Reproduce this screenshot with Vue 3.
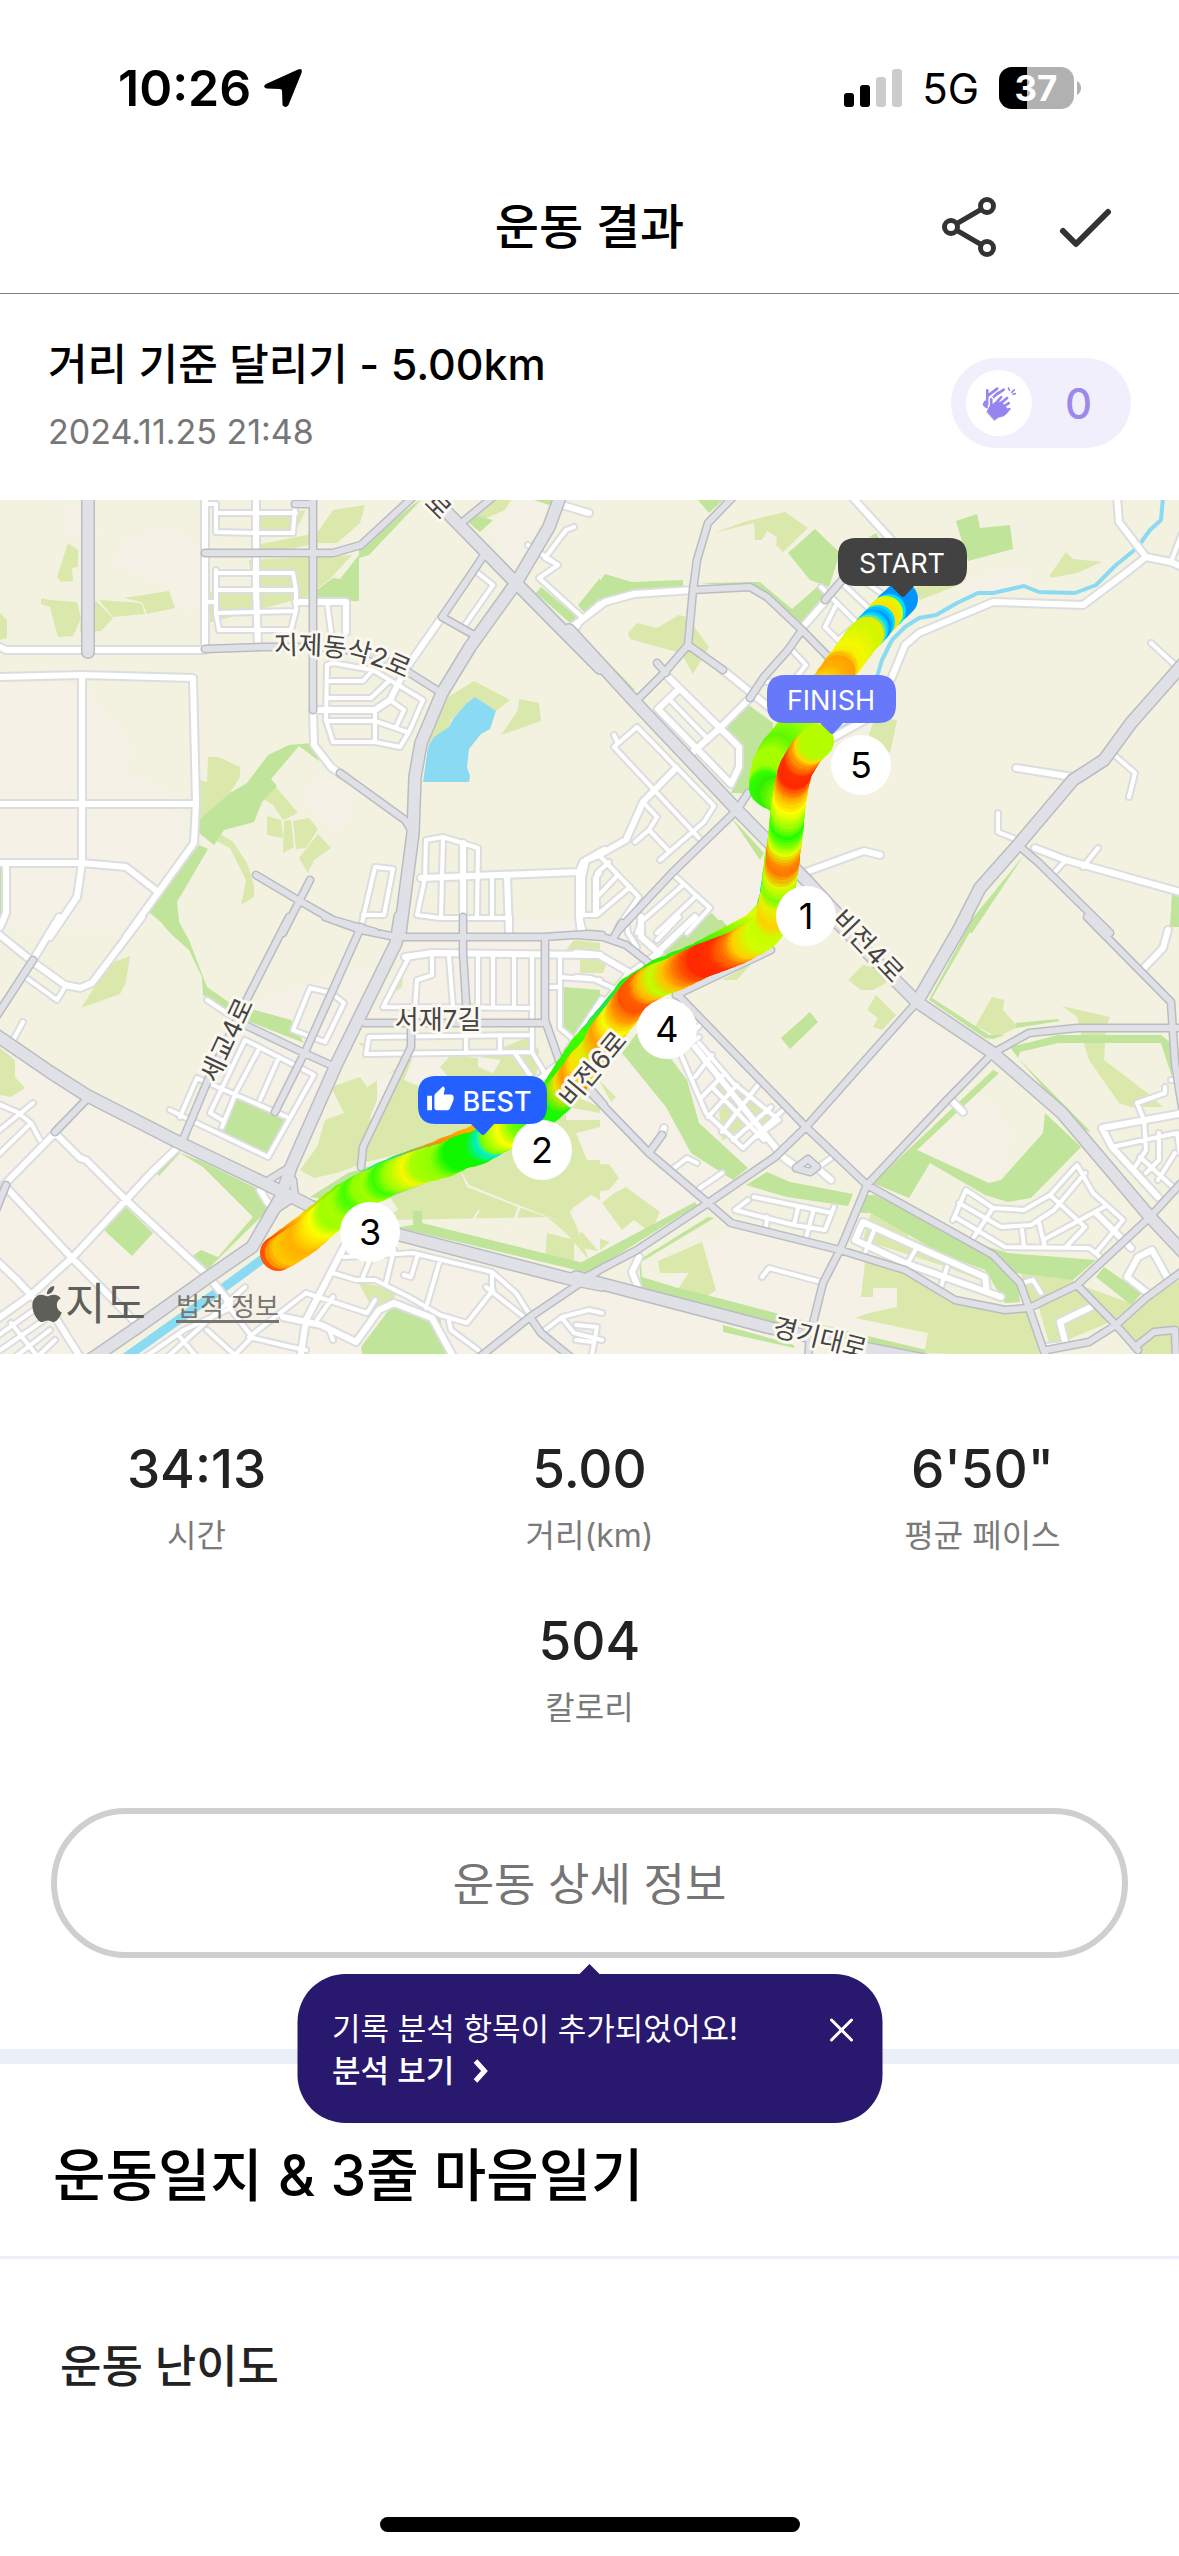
<template>
    <div class="page">
        <div class="status">
            <div class="status-side">
                <span class="clock">10:26</span>
                <svg class="locate" viewBox="0 0 40 40" aria-hidden="true">
                    <path d="M3 16 35 1.500Q40-.5 38.500 5L25.500 37Q22.500 41 19.500 37L19 22.500Q18.500 21 17 21L3.500 20.500Q-1 19 3 16Z" />
                </svg>
            </div>
            <div class="status-side right">
                <svg class="signal" viewBox="0 0 58 38" aria-hidden="true">
                    <rect x="0" y="24" width="10" height="14" rx="3" />
                    <rect x="16" y="16" width="10" height="22" rx="3" />
                    <rect class="off" x="32" y="8" width="10" height="30" rx="3" />
                    <rect class="off" x="48" y="0" width="10" height="38" rx="3" />
                </svg>
                <span class="network">5G</span>
                <svg class="battery" viewBox="0 0 83 42" aria-label="37%">
                    <clipPath id="cell"><rect width="75" height="42" rx="13" /></clipPath>
                    <g clip-path="url(#cell)">
                        <rect width="75" height="42" fill="#b1b1b1" />
                        <rect width="28" height="42" />
                    </g>
                    <path d="M78 14Q82 16 82 21T78 28Z" fill="#b1b1b1" />
                    <text x="37" y="34" text-anchor="middle">37</text>
                </svg>
            </div>
        </div>

        <header class="bar">
            <h1>운동 결과</h1>
            <div class="actions">
                <button type="button" aria-label="공유">
                    <svg viewBox="0 0 60 60">
                        <path d="M18 26.500 42 12.500M18 33.500 42 47.500" />
                        <circle cx="12" cy="30" r="6.500" />
                        <circle cx="48" cy="9" r="6.500" />
                        <circle cx="48" cy="51" r="6.500" />
                    </svg>
                </button>
                <button type="button" aria-label="완료">
                    <svg viewBox="0 0 60 60"><path class="tick" d="M8 34 21 47 53 15" /></svg>
                </button>
            </div>
        </header>

        <section class="summary">
            <div>
                <h2>거리 기준 달리기 - 5.00km</h2>
                <p>2024.11.25 21:48</p>
            </div>
            <button type="button" class="clap" aria-label="박수">
                <span class="clap-icon">
                    <svg viewBox="186 644 106 106">
                        <g class="finger">
                            <path d="M202 657V700M196 692 192 700 200 708M207 671 232 652M214 684 235 664M225 673 252 655" />
                        </g>
                        <path class="gap" d="M214 684V716M226 698 245 677M236 702 264 678M244 711 268 696M250 720 270 713" />
                        <path class="palm" d="M201 722 210 704 226 694 245 692 262 712 266 722 252 735 236 739 224 748Z" />
                        <g class="finger">
                            <path d="M214 684V716M226 698 244 678M236 702 262 680M244 711 267 696M250 722 269 714" />
                        </g>
                        <path class="spark" d="M266 650 269 657M276 663 284 656M280 669 287 667" />
                    </svg>
                </span>
                <span class="clap-count">0</span>
            </button>
        </section>

        <section class="map">
            <svg class="canvas" viewBox="0 0 1179 854" role="img" aria-label="달리기 경로">
                <rect width="1179" height="854" fill="#f3f1e0" />
                <path class="urban" :d="map.urban" />
                <path class="field" :d="map.field" />
                <path class="urban" :d="map.clearing" />
                <path class="park" :d="map.park" />
                <path class="lake" :d="map.lake" />
                <path class="river" :d="map.river" />
                <path class="creek" :d="map.creek" />
                <path class="lane edge" :d="map.lane" />
                <path class="street edge" :d="map.street" />
                <path class="lane" :d="map.lane" />
                <path class="street" :d="map.street" />
                <path class="road edge" :d="map.road" />
                <path class="highway edge" :d="map.highway" />
                <path class="road" :d="map.road" />
                <path class="highway" :d="map.highway" />

                <circle v-for="(dot, i) in route" :key="i" :cx="dot.x" :cy="dot.y" r="17" :fill="dot.color" />

                <g class="names">
                    <path id="curve" d="M274 155Q310 153 340 157T410 181" fill="none" stroke="none" />
                    <text><textPath href="#curve">지제동삭2로</textPath></text>
                    <text v-for="n in names" :key="n.text + n.x" text-anchor="middle" :transform="`translate(${n.x} ${n.y}) rotate(${n.angle})`" dy="9">{{ n.text }}</text>
                </g>

                <g v-for="k in laps" :key="k.label" class="lap">
                    <circle :cx="k.x" :cy="k.y" r="30" />
                    <text :x="k.x" :y="k.y + 13">{{ k.label }}</text>
                </g>

                <g v-for="b in badges" :key="b.label" class="badge" :transform="`translate(${b.x} ${b.y})`">
                    <path :fill="b.color" d="M18 0H111Q129 0 129 18V30Q129 48 111 48H76L67 58Q65 60 63 58L53 48H18Q0 48 0 30V18Q0 0 18 0Z" />
                    <path v-if="b.thumb" class="thumb" transform="translate(8 9) scale(1.200)" d="M1 21h4V9H1v12zm22-11c0-1.100-.9-2-2-2h-6.310l.95-4.570.03-.32c0-.41-.17-.79-.44-1.060L14.170 1 7.590 7.590C7.220 7.950 7 8.450 7 9v10c0 1.100.9 2 2 2h9c.83 0 1.540-.5 1.840-1.220l3.020-7.050c.09-.23.14-.47.14-.73v-2z" />
                    <text :x="b.thumb ? 79 : 64" y="35" :class="{ strong: b.thumb }">{{ b.label }}</text>
                </g>
            </svg>
            <div class="credit">
                <span class="brand">
                    <svg viewBox="2 0 20 24" aria-hidden="true">
                        <path d="M12.152 6.896c-.948 0-2.415-1.078-3.960-1.040-2.040.027-3.910 1.183-4.961 3.014-2.117 3.675-.546 9.103 1.519 12.090 1.013 1.454 2.208 3.090 3.792 3.039 1.520-.065 2.090-.987 3.935-.987 1.831 0 2.350.987 3.960.948 1.637-.026 2.676-1.480 3.676-2.948 1.156-1.688 1.636-3.325 1.662-3.415-.039-.013-3.182-1.221-3.220-4.857-.026-3.040 2.480-4.494 2.597-4.559-1.429-2.090-3.623-2.324-4.390-2.376-2-.156-3.675 1.090-4.610 1.090zM15.530 3.830c.843-1.012 1.400-2.427 1.245-3.830-1.207.052-2.662.805-3.532 1.818-.78.896-1.454 2.338-1.273 3.714 1.338.104 2.715-.688 3.559-1.701" />
                    </svg>
                    지도
                </span>
                <a href="#legal">법적 정보</a>
            </div>
        </section>

        <dl class="stats">
            <div v-for="s in stats" :key="s.label" class="stat">
                <dt>{{ s.label }}</dt>
                <dd>{{ s.value }}</dd>
            </div>
        </dl>

        <div class="detail">
            <button type="button" class="detail-btn">운동 상세 정보</button>
            <div v-if="tipOpen" class="tip">
                <p>
                    기록 분석 항목이 추가되었어요!<br />
                    <a href="#analysis">
                        분석 보기
                        <svg viewBox="0 0 16 26" aria-hidden="true"><path d="M3 3 12 13 3 23" /></svg>
                    </a>
                </p>
                <button type="button" aria-label="닫기" @click="tipOpen = false">
                    <svg viewBox="0 0 24 24"><path d="M2 2 22 22M22 2 2 22" /></svg>
                </button>
            </div>
        </div>

        <section class="diary">
            <h2>운동일지 &amp; 3줄 마음일기</h2>
            <h3>운동 난이도</h3>
        </section>

        <div class="home"></div>
    </div>
</template>

<script setup>
import { ref } from "vue";

const tipOpen = ref(true);

const stats = [
    { value: "34:13", label: "시간" },
    { value: "5.00", label: "거리(km)" },
    { value: "6'50\"", label: "평균 페이스" },
    { value: "504", label: "칼로리" },
];

const laps = [
    { label: "5", x: 861, y: 265 },
    { label: "1", x: 806, y: 416 },
    { label: "4", x: 667, y: 529 },
    { label: "2", x: 542, y: 650 },
    { label: "3", x: 370, y: 732 },
];

const badges = [
    { label: "START", x: 838, y: 38, color: "#424242" },
    { label: "FINISH", x: 767, y: 175, color: "#6878fb" },
    { label: "BEST", x: 418, y: 576, color: "#2360ff", thumb: true },
];

const names = [
    { text: "로", x: 438, y: 6, angle: 45 },
    { text: "세교4로", x: 227, y: 540, angle: -65 },
    { text: "서재7길", x: 438, y: 520, angle: 0 },
    { text: "비전6로", x: 593, y: 569, angle: -50 },
    { text: "비전4로", x: 868, y: 446, angle: 46 },
    { text: "경기대로", x: 820, y: 838, angle: 14 },
];

// vector tiles: nw, ne, sw, se. Shapes are "x,y x,y" lists split by "|"
const tiles = [
    {
        x: 0, y: -10,
        urban: "0,580 215,580 290,690 350,770 330,850 420,890 508,1060 330,1320 0,1320|300,220 330,150 420,110 500,140 530,200 520,340 480,365 440,290|790,930 830,850 930,890 910,1000 870,1030|165,30 280,130 170,130|1290,120 1350,30 1440,30 1380,170 1340,240",
        field: "178,160 203,180 203,232 188,235 190,272 160,277 148,260|106,323 130,330 200,335 212,385 190,437 152,442 130,350 108,342|250,332 295,385 265,422 210,425 212,370|260,330 368,340 378,372 295,382|325,325 443,303 457,355 385,372 370,335|0,370 18,390 18,445 0,450|680,80 800,60 775,120 680,120|670,165 830,130 870,60 955,45 940,100 880,160 830,160 670,200|650,210 920,195 860,270 800,320 545,400 545,310 660,290|1240,573 1333,630 1296,662 1240,625 1180,690 1175,715 1115,770 1130,720 1170,620|1357,627 1410,640 1414,693 1310,735 1355,660|545,800 570,800 627,832 627,862 600,910 522,990 522,870 540,875|680,920 720,888 780,968 740,990 715,945|698,977 735,990 740,1045 698,1035|742,993 760,990 768,1070 740,1088|765,992 808,983 832,1018 800,1075 775,1078|832,1032 866,1075 820,1110 804,1148 782,1105|548,1045 565,1022 610,1055 645,1120 664,1185 664,1222 630,1245 642,1170 600,1075|1270,30 1335,30 1320,60 1260,90 1245,75",
        park: "520,990 600,910 645,880 700,795 755,765 815,758 835,812 783,768 708,868 725,887 685,935 665,997 585,1020 560,1065 520,1030|520,1065 543,1078 462,1235 470,1320 445,1320 390,1265|830,300 870,265 890,268 938,195 938,332 830,332|1085,40 1100,30 965,195 938,205 938,180|1415,290 1510,385 1490,400 1400,310|1568,265 1568,330 1530,370 1510,345|1235,75 1290,90 1255,125 1225,100|0,1130 6,1130 6,1260 0,1280|1395,30 1445,30 1435,45|1510,430 1568,490 1568,510",
        lake: "1242,622 1296,662 1280,718 1258,733 1225,778 1220,830 1228,858 1226,875 1105,875 1120,770 1135,742 1175,712 1185,688 1220,640",
        highway: "1465,20 1435,110 1350,280 1230,470 1155,610 1100,760 1085,860 1080,1030 1045,1330|230,20 230,485|1130,20 1350,280 1568,535",
        road: "817,20 817,660|535,190 830,190 870,188 945,165 1080,20|535,478 680,470 817,470 960,485 1060,540 1150,605|1265,195 1235,250 1155,380 1240,435|890,850 1060,990 1080,1030|668,1155 780,1230 870,1290 980,1325|810,1170 740,1330|1210,1280 1210,1330|770,42 817,42|1290,20 1215,90",
        street: "535,20 535,478|0,470 15,480 535,480|670,20 670,300 675,470|0,562 215,555 505,565 512,940 508,1060 330,1340|215,555 215,1120 200,1220 130,1340|0,942 512,942|0,1120 215,1120 330,1130 412,1205|15,1120 15,1270 0,1310|817,660 822,765 865,830 895,855|1155,380 1060,540 1020,630 980,660 817,660|1100,1163 1515,1145 1515,1280 1520,1330|1515,1145 1525,1115 1580,1080|1210,1060 1210,1280|1325,1160 1330,1330|1470,45 1540,70|775,335 905,335 905,425",
        lane: "535,42 565,42 565,125 670,130 765,130 772,50|565,70 775,70|565,240 565,370 572,420 760,420 775,360 775,300 765,248 565,248|565,300 775,300|565,370 775,362|535,335 560,335|855,335 865,425|855,525 870,520 975,540 1040,585 1105,630 1070,725 1045,772 980,755 870,755 852,690 855,525|855,573 950,573 970,545|855,625 970,625 1020,570|855,693 980,693 1065,725|980,660 980,755|1020,630 1055,660 1035,710|1250,248 1288,285 1215,405|1500,110 1480,120 1425,205 1460,225 1410,265 1525,385 1568,340|1380,165 1460,225|1525,385 1500,425|945,1310 980,1130 1028,1138 1005,1275 950,1275|1110,1163 1115,1050 1158,1042 1250,1075 1248,1283|1158,1042 1152,1280|1110,1163 1090,1275 1150,1283 1330,1283|1285,1160 1285,1283|1568,1150 1555,1165 1555,1275 1515,1275",
    },
    {
        x: 580, y: -10,
        urban: "240,1150 400,1000 470,1100 470,1280 400,1320 345,1320 340,1255|960,290 1080,250 1180,240 1160,290 1060,310",
        field: "350,130 430,95 535,67 595,115 530,185 512,165 515,140 490,122 475,150 457,150 455,100|125,430 148,398 200,415 260,375 280,380 338,470 295,553 265,490 205,470 130,448|1270,185 1290,208 1365,215 1300,250 1228,265 1230,255|870,290 1003,280 890,330|770,680 828,690 810,790 755,735",
        park: "308,30 375,30 338,70|545,190 615,117 680,190 650,290 600,270|0,360 65,253 135,275 268,270 270,295 140,305 60,330|983,92 1038,73 1047,115 1123,105 1132,178 1015,212|310,280 470,275 555,358 620,290 650,300 580,400 445,290|435,640 505,700 500,860 430,910 395,910 420,840 420,770 365,715|395,980 480,1090 470,1110|1160,1095 1025,1330 1000,1320|1548,1210 1568,1210 1568,1312 1542,1312|290,1315 345,1270 385,1320|0,430 145,600 130,600|755,140 775,130 785,150",
        creek: "775,570 790,510 815,450 850,410 885,385 930,375 985,340 1040,310 1080,310 1160,288 1200,305 1295,310 1350,285 1400,225 1455,175 1490,120 1520,90 1525,20|740,680 640,740",
        highway: "-30,420 145,635 410,960 590,1170 680,1280|1580,520 1440,700 1370,810 1290,870 1145,1065 1045,1195 985,1330",
        road: "400,20 335,100 305,210 295,300 283,465|295,300 445,292 490,320 580,420 700,560|283,465 220,550 145,635|283,465 375,540|580,420 545,480 480,560 445,625|200,520 225,550|640,330 690,265|410,960 240,1150 95,1330|410,960 440,910|1145,1065 1200,1120 1385,1330",
        street: "295,300 140,312 65,335 -20,410|580,415 650,320|715,25 825,165|375,540 510,665|445,625 365,715 295,785|225,555 365,715 415,770 415,830 395,882 203,657 260,597|640,755 745,690 815,560 850,465 885,430 1080,335 1315,345 1420,255 1480,200 1410,95 1405,20|1480,200 1545,215 1580,235|590,1145 742,1083 785,1095|1140,835 1290,862|1190,1075 1270,1110 1568,1205|250,835 165,935 120,1050 50,1095 15,1110 5,1160 5,1275",
        lane: "232,628 330,740|88,770 150,712 350,948 325,995 210,1110|88,735 100,760 88,770 310,1045|165,935 200,980 180,1020 145,1055|180,1020 230,1080|50,1095 155,1220 100,1310|100,1155 45,1220|75,1115 45,1150 45,1275 0,1275|45,1275 130,1190|245,1155 340,1255 280,1330|270,1185 160,1295 150,1330|300,1220 200,1330|1545,215 1575,130|1390,788 1450,848 1435,920|1493,460 1555,525|1092,970 1092,1025 1145,1050|1355,1075 1315,1130|1270,1110 1240,1150|630,290 760,440|685,280 780,380|740,270 800,320|670,345 640,410 675,450 730,400|555,480 590,525 560,570 485,575",
    },
    {
        x: 0, y: 420,
        urban: "0,360 225,540 690,790 540,1075 250,1310 0,1310|350,1310 700,1010 900,960 1480,1085 1568,1110 1568,1310|480,640 640,250 1010,130 880,430 740,740|960,310 1430,310 1568,550 1568,0 1080,0 1050,130",
        field: "340,108 330,185 315,222 213,263 265,170 290,130|0,385 40,420 40,470 65,505 30,530 0,525|1095,400 1250,415 1380,350 1410,390 1400,480 1568,560 1568,900 1490,870 1540,1020 1480,940 1430,890 1010,900 980,830 1250,640 950,730 880,760 820,775 785,750 830,680 850,600 900,580 865,500 940,470 960,500 1060,430|1060,110 1000,240 1050,200|935,1085 1035,1110 1030,1150 980,1180|1500,60 1568,70 1568,160 1530,130 1480,90|935,370 970,370 970,400|1430,940 1500,960 1500,1040 1425,1020",
        // bare ground and footpaths inside the green areas
        clearing: "1085,395 1180,405 1150,440 1170,470 1100,500 1055,480|1250,410 1310,420 1290,460 1250,440|985,480 1050,440 1010,560 965,600 985,540|1505,640 1568,620 1568,720 1535,720|1500,860 1545,825 1568,840 1568,1000 1510,920 1490,880|1200,745 1225,795 1355,855 1475,910 1355,862 1220,802|1355,860 1362,862 1335,940 1328,938|1250,870 1256,870 1235,915 1228,910|980,825 1020,830 1040,870 1010,890 985,870|1480,560 1568,580 1568,600 1480,600",
        park: "415,0 465,0 495,60 540,200 600,250 760,300 795,370 640,300 530,225 528,170 495,90 445,40|620,530 745,590 700,705 580,640|330,860 400,940 345,1008 273,930|465,695 530,740 662,890 570,1010 525,990 500,1010 540,1050 700,870 680,810 530,725|410,760 460,690 470,700 415,768|945,1280 1030,1150 1150,1190 1170,1310 950,1310|810,830 910,760 1080,700 1250,620 1250,650 860,840|1475,200 1568,210 1568,320 1500,360 1470,320|1045,920 1080,915 1080,872 1103,872 1103,910 1420,1000 1568,1040 1540,1060 1045,925",
        river: "320,1320 600,1090 690,1015",
        highway: "1047,-10 1035,70 880,430 760,740 735,830 660,980 540,1075 360,1220 235,1320|-10,345 130,455 225,525 465,665 690,790 815,860 1045,945 1480,1075 1575,1095",
        road: "850,-10 945,30 1035,50 1210,52 1420,50 1540,42 1575,45|755,-10 640,250 545,480 475,665|945,20 800,390 720,575|630,310 790,395 875,440|85,120 -10,290|225,540 145,635|955,308 1425,308|1425,50 1425,300 1465,430|1210,-10 1210,100 1220,290|1075,330 1075,380 950,680 945,740|690,790 745,750|720,870 770,830 765,780|980,835 1100,780 1260,700|1580,1040 1385,1190 1245,1320|1385,1190 1415,1240 1500,1320|-10,870 15,795|1530,490 1580,555",
        street: "-10,35 85,125 170,195 210,205 240,190 370,-10|155,-10 85,120|145,640 10,795 185,1010 360,1215|145,640 210,715 225,720 330,840 540,1065 600,1150|465,680 395,760 330,840 190,1010 80,1125 -10,1200|80,1125 150,1200 215,1320|-10,1020 45,1080 80,1125|1060,110 1130,100 1568,105|1575,240 1465,430 1410,480|740,1190 840,1215 930,1265 990,1170 1030,1150 1130,1195 1190,1320|680,810 700,850|900,980 800,1200 785,1320|1330,-10 1330,45|1515,-10 1525,40",
        lane: "65,170 150,240 170,200|35,360 60,305|-10,550 45,575 80,610 105,660|85,550 -10,640|-10,710 75,615|-10,1250 90,1170|-10,1300 115,1200|30,1320 130,1230|90,1320 145,1260|30,1210 100,1310|445,570 480,590 700,710 820,465 640,360 550,580 580,600|470,590 515,475 750,590|680,380 620,510 580,620|730,410 680,540|540,240 620,300|765,330 810,205 865,220 900,250 850,365 765,330|1000,260 1070,110|1130,110 1130,165 1090,180 1085,265|1000,262 1390,265|1175,110 1185,262|1250,110 1250,262|1290,110 1290,262|1345,110 1345,262|1390,110 1390,400|1465,110 1465,325 1500,360|1435,200 1465,200|1465,170 1568,180|1390,345 965,350 958,402 1390,395 1430,470|1345,395 1385,465|1218,345 1218,395|1308,345 1308,395|870,1060 930,1080 980,1080 1070,1130 1150,1185 1220,1210 1290,1110|900,1010 1080,1000 1285,1055 1350,1120 1385,1185|1150,1020 1115,1165|970,1010 950,1070|1030,990 1010,1090|1090,1010 1075,1070 1055,1065|800,1120 650,1250 760,1280 800,1290|800,1120 960,1180 980,1140|870,1130 830,1200|430,1320 640,1100|380,1310 480,1230 610,1160|540,1230 620,1310|470,1250 520,1320|590,1150 660,1250 600,1320|1170,1190 1180,1230 1250,1290|1270,1100 1370,1190|1415,1240 1470,1190 1540,1170 1575,1180|1470,1195 1500,1240 1575,1260|1285,1055 1285,1110|860,1230 870,1260",
    },
    {
        x: 580, y: 420,
        urban: "590,620 330,840 0,1050 0,540 110,400 250,220|0,1075 1220,1320 0,1320|420,900 1100,1170 700,1240 200,1100|750,790 590,620 870,280 1060,410|890,690 1040,510 1130,630 1100,770 1060,790|0,0 200,0 0,300",
        field: "700,180 740,135 790,150 800,190 765,210 735,210|775,225 825,285 790,330 765,320 780,295 750,270|1078,230 1108,240 1105,270 1145,320 1090,350 1045,325 1025,335|1260,258 1385,290 1375,320 1370,420 1480,515 1525,560 1440,560 1410,550 1330,420 1310,340 1300,290|20,735 75,733 102,775 75,810 40,815 18,790|90,820 120,800 208,875 185,938 140,900 110,930 58,850|0,935 78,965 50,993 0,985|203,1023 318,965 355,1110 310,1145 240,1130 285,1060 210,1060|745,1025 870,1060 990,1150 1110,1180 1180,1180 1215,1310 900,1300 910,1240 720,1195 755,1180 830,1160 830,1105 765,1105 765,1130 735,1130|760,875 850,915 860,950 1050,1050 1065,1090 960,1040 740,960|1150,1035 1200,1035 1250,1050 1300,1090 1180,1150 1155,1080|1200,1165 1300,1110 1380,1210 1230,1280|1320,1100 1440,1150 1568,1080 1568,1310 1470,1310 1400,1210|355,480 400,470 530,600 370,660|370,180 450,130 410,180|0,120 70,130 60,160 0,160|0,550 20,560 0,640|50,480 95,530 80,545",
        park: "110,400 150,340 240,420 280,480 310,610 440,745 400,780 290,700 225,560|435,795 490,755 550,785 715,822 700,858 540,830|1025,0 1038,0 920,235 1070,345 1110,345 1080,357 1060,355 912,240|765,790 1080,450 1095,460 880,690 1070,790 1100,780 1210,640 1215,580 1310,680 1180,835 1120,845 1060,825 915,730 860,835|1145,415 1335,635 1300,620|600,275 622,305 548,387 525,355|735,825 770,825 1010,960 1120,1000 1350,1020 1290,1080 1140,1060 1150,1145 1110,1150 1060,1050 940,1000 760,880 735,880|1125,380 1180,365 1250,345 1520,345 1545,370 1548,470 1520,370 1250,370 1150,395 1145,415|300,845 305,855 45,1045 0,1050 0,1030|335,890 350,895 160,1025 162,1070 255,1105 310,1120 600,1205 905,1290 900,1302 830,1295 250,1135 160,1100 155,1020|375,1215 560,1275 560,1283 375,1235|1370,1040 1470,1120 1440,1155 1350,1070|1140,310 1250,297 1255,303 1140,325|0,205 60,225 60,250 0,330|210,110 300,0 370,0 400,40 300,70",
        highway: "660,-10 880,245 1080,400 1260,580 1490,890 1580,1000|1010,-10 880,245|-10,1070 150,1120 500,1225 700,1275 900,1320",
        road: "880,245 590,620 510,710 335,850 150,990 15,1070|250,220 590,620 750,795 950,920 1080,1005 1150,1090 1175,1165 1220,1320|1080,400 960,540 750,795 680,990 635,1090 600,1245 595,1320|30,520 180,700 335,850 395,910 680,990 850,1050 980,1140 1110,1170 1175,1165 1300,1095 1490,890 1580,780|1300,1095 1400,1215 1460,1290|1220,1290 1330,1265 1400,1215 1480,1135 1580,1050|1450,1280 1500,1235 1555,1230 1558,1320|1080,400 1175,340 1300,325 1580,325|1325,-10 1545,245 1555,430 1575,560|185,690 215,645|-10,45 60,50 120,75 180,130|90,50 110,10|565,745 595,718 620,742 600,755 565,745|250,225 500,90",
        street: "210,95 120,170 -10,360|160,-10 160,50 205,95 300,-10|-10,100 50,105 130,160|1537,30 1525,85 1470,150|300,380 530,710 570,745|215,645 220,625|155,1010 135,1055 155,1110|620,745 655,780|970,540 1000,575|720,960 740,905 870,975 1060,1070 1065,1115|720,960 850,1030 1100,1130|1480,1115 1430,1070 1460,1010 1495,990 1535,1070|1220,1280 1270,1275 1255,1205 1335,1160|1580,580 1365,625 1390,680 1510,830|1350,880 1440,985",
        lane: "120,-10 125,40 150,80|200,60 260,-10|-10,170 30,175 85,205|260,390 330,580 425,685 530,570|320,310 300,330|310,370 400,490 520,600 460,650|260,400 310,350|300,470 345,405|320,530 380,460|335,590 410,495|370,635 465,495|400,660 500,560|345,500 480,660|620,745 655,715|245,745 280,715 305,730|315,805 370,760|475,1070 495,1045 630,1085|440,840 405,870 560,915 640,930 665,860|455,830 660,880|485,925 490,890|570,865 560,915|610,875 590,955|770,925 745,1000|880,980 850,1045|960,1040 940,1110|975,900 1010,810 1080,865 1160,870 1230,825 1300,735 1340,820 1420,900 1350,1000|980,890 1110,980 1330,985 1370,1020|990,850 1100,920 1180,915 1240,870 1320,760|1080,865 1025,960|1230,825 1320,920 1270,980|1200,910 1215,980|1155,930 1160,980|1370,860 1210,960|1155,1090 1185,1080 1205,1120|1530,500 1530,520 1455,550 1475,600 1480,690 1450,740|1390,680 1560,640 1568,700|1515,640 1515,720 1480,760|1465,710 1550,800|1555,700 1510,780|-10,1215 45,1220 30,1320|-10,1260 35,1265|1545,480 1575,480",
    },
];

const project = (tile, pair) => {
    const [x, y] = pair.split(",").map(Number);
    return [tile.x + x * 0.3825, tile.y + y / 3];
};

const toPath = (kind, close) =>
    tiles
        .filter((t) => t[kind])
        .flatMap((t) => t[kind].split("|").map((line) => {
            const pts = line.split(" ").map((p) => project(t, p).map(Math.round).join(" "));
            return "M" + pts.join("L") + (close ? "Z" : "");
        }))
        .join("");

const map = {};
["urban", "field", "clearing", "park", "lake"].forEach((k) => (map[k] = toPath(k, true)));
["river", "creek", "lane", "street", "road", "highway"].forEach((k) => (map[k] = toPath(k, false)));

// pace track: tile index, position and heat colour
const track = [
    [1, "838,328", "0095ff"], [1, "830,340", "0095ff"], [1, "815,352", "0095ff"], [1, "808,362", "00e0ff"], [1, "800,370", "d8ff00"], [1, "788,388", "ffe000"],
    [1, "780,396", "00e0ff"], [1, "768,410", "0095ff"], [1, "760,420", "00e0ff"], [1, "750,432", "e0f000"], [1, "735,450", "d0f800"],
    [1, "700,505", "f4f800"], [1, "685,525", "f4f000"], [1, "675,545", "ffa000"], [1, "655,575", "ffb000"], [1, "630,610", "ffe000"],
    [1, "580,680", "c0ff00"], [1, "545,740", "90ff00"], [1, "515,780", "60f800"], [1, "495,825", "a8ff00"], [1, "486,870", "a0ff00"],
    [1, "485,895", "30ff00"], [1, "508,910", "30f000"], [1, "545,935", "90ff00"], [1, "535,1050", "80ff00"], [1, "522,1150", "90ff00"], [1, "514,1220", "00e8d0"],
    [1, "502,1270", "a0ff00"], [1, "460,1320", "e0ff00"], [3, "310,120", "30f000"], [3, "212,166", "30f000"], [3, "137,220", "30f000"],
    [3, "82,300", "20e060"], [3, "15,388", "40ff00"], [2, "1452,528", "30f000"], [2, "1332,625", "ffe000"], [2, "1155,710", "ff9000"],
    [2, "1008,773", "20e8a0"], [2, "903,840", "60ff00"], [2, "800,935", "ffd000"], [2, "724,1000", "ff4800"],
    [2, "728,1002", "ff5800"], [2, "738,995", "ff9800"], [2, "755,985", "ffc800"], [2, "800,950", "ffb000"], [2, "835,915", "ffe800"], [2, "850,900", "f8ff00"],
    [2, "875,875", "a0ff00"], [2, "905,850", "a8ff00"], [2, "940,815", "40ff00"], [2, "960,805", "90ff00"], [2, "985,795", "a0ff00"],
    [2, "1015,775", "38ff00"], [2, "1040,765", "90ff00"], [2, "1090,745", "f8f800"], [2, "1115,735", "a8ff00"], [2, "1165,720", "90ff00"],
    [2, "1200,700", "10f800"], [2, "1255,680", "10f800"], [2, "1285,660", "00f0d0"], [2, "1300,650", "80ff00"], [2, "1340,630", "ffff00"],
    [2, "1370,605", "80ff00"], [2, "1420,570", "10ff00"], [2, "1460,530", "20f800"], [2, "1490,490", "f0e000"], [2, "1510,460", "ff9000"],
    [2, "1530,430", "ffe000"], [2, "1560,395", "e0f000"], [3, "70,335", "ffa000"], [3, "100,295", "f8ff00"], [3, "122,260", "ffa000"],
    [3, "145,228", "ff5000"], [3, "165,205", "ff6000"], [3, "190,188", "ffc000"], [3, "220,173", "c0ff00"], [3, "255,158", "ffc000"],
    [3, "290,138", "ff6800"], [3, "325,120", "ff2800"], [3, "375,98", "ff3000"], [3, "410,83", "ff7000"], [3, "440,66", "ffd000"],
    [3, "475,43", "d0ff00"], [3, "500,10", "c8ff00"], [1, "508,1265", "ffd000"], [1, "515,1220", "e8f000"], [1, "520,1190", "80ff00"],
    [1, "525,1150", "e0f800"], [1, "530,1110", "ff7800"], [1, "532,1085", "ff8800"], [1, "536,1050", "e0ff00"], [1, "541,1000", "20ff00"],
    [1, "543,965", "a0ff00"], [1, "548,925", "ffff00"], [1, "553,885", "ffb000"], [1, "562,845", "ff2800"], [1, "575,815", "ff3000"],
    [1, "592,785", "ff9000"], [1, "605,770", "ffd800"], [1, "615,760", "c0f800"], [1, "626,748", "a8ff00"],
];

const rgb = (hex) => [0, 2, 4].map((i) => parseInt(hex.slice(i, i + 2), 16));

// overlapping dots give the banded look of the heat line
const route = [];
track.slice(1).forEach(([ti, pos, color], i) => {
    const [pt, ppos, pcolor] = track[i];
    const a = project(tiles[pt], ppos);
    const b = project(tiles[ti], pos);
    const ca = rgb(pcolor);
    const cb = rgb(color);
    const steps = Math.max(1, Math.round(Math.hypot(b[0] - a[0], b[1] - a[1]) / 3));
    for (let s = 0; s < steps; s++) {
        const t = s / steps;
        route.push({
            x: Math.round(a[0] + (b[0] - a[0]) * t),
            y: Math.round(a[1] + (b[1] - a[1]) * t),
            color: `rgb(${ca.map((c, j) => Math.round(c + (cb[j] - c) * t)).join(",")})`,
        });
    }
});
</script>

<style>
body {
    margin: 0;
    background: #fff;
}
</style>

<style scoped>
.page {
    min-height: 100vh;
    display: flex;
    flex-direction: column;
    font-family: Inter, "Noto Sans CJK KR", sans-serif;
    color: #000;
}

h1,
h2,
h3,
p,
dl,
dd {
    margin: 0;
    font-weight: 500;
}

button {
    border: 0;
    padding: 0;
    background: none;
    font: inherit;
    color: inherit;
    cursor: pointer;
}

svg {
    display: block;
}

/* status bar */
.status {
    display: flex;
    justify-content: space-between;
    align-items: center;
    height: 96px;
    padding: 40px 97px 12px 118px;
}

.status-side {
    display: flex;
    align-items: center;
    gap: 12px;
}

.status-side.right {
    gap: 20px;
}

.clock {
    font-size: 50px;
    font-weight: 600;
}

.locate {
    width: 40px;
    height: 40px;
}

.signal {
    width: 58px;
    height: 38px;
}

.signal .off {
    fill: #ccc;
}

.network {
    font-size: 42px;
}

.battery {
    width: 83px;
    height: 42px;
}

.battery text {
    fill: #fff;
    font-size: 35px;
    font-weight: 700;
}

/* title bar */
.bar {
    display: grid;
    grid-template-columns: 1fr auto 1fr;
    align-items: center;
    height: 133px;
    padding: 12px 64px 0;
    border-bottom: 1px solid #808080;
}

.bar h1 {
    grid-column: 2;
    padding-bottom: 8px;
    font-size: 48px;
}

.actions {
    justify-self: end;
    display: flex;
    gap: 56px;
}

.actions svg {
    width: 60px;
    height: 60px;
    fill: none;
    stroke: #333;
    stroke-width: 5;
}

.actions circle {
    fill: #fff;
}

.actions .tick {
    stroke-width: 6;
    stroke-linecap: round;
    stroke-linejoin: round;
}

.summary {
    display: flex;
    justify-content: space-between;
    align-items: flex-start;
    height: 142px;
    padding: 40px 48px 24px;
}

.summary h2 {
    font-size: 43px;
    line-height: 60px;
}

.summary p {
    margin-top: 14px;
    font-size: 34px;
    font-weight: 400;
    line-height: 48px;
    color: #777;
}

.clap {
    display: flex;
    align-items: center;
    width: 180px;
    height: 90px;
    margin-top: 24px;
    padding-left: 15px;
    border-radius: 45px;
    background: #f2effd;
}

.clap-icon {
    display: grid;
    place-items: center;
    width: 66px;
    height: 66px;
    border-radius: 50%;
    background: #fff;
}

.clap svg {
    width: 35px;
    height: 35px;
    fill: none;
    stroke: #9685ef;
    stroke-linecap: round;
    stroke-linejoin: round;
}

.finger {
    stroke-width: 8;
}

.gap {
    stroke: #fff;
    stroke-width: 15;
}

.palm {
    fill: #9685ef;
    stroke-width: 2;
}

.spark {
    stroke-width: 5;
}

.clap-count {
    flex: 1;
    padding-right: 6px;
    font-size: 42px;
    font-weight: 500;
    color: #9b8aeb;
}

/* map */
.map {
    position: relative;
}

.canvas {
    width: 100%;
    height: auto;
}

.urban {
    fill: #f6f1e6;
}

.field {
    fill: #dae8ac;
}

.park {
    fill: #bfe49a;
}

.lake {
    fill: #8adaf4;
}

.river,
.creek,
.lane,
.street,
.road,
.highway {
    fill: none;
    stroke-linecap: round;
    stroke-linejoin: round;
}

.river {
    stroke: #8adaf4;
    stroke-width: 9;
}

.creek {
    stroke: #8adaf4;
    stroke-width: 4;
}

.lane {
    stroke: #fff;
    stroke-width: 4;
}

.street {
    stroke: #fff;
    stroke-width: 6;
}

.road {
    stroke: #e0e1e6;
    stroke-width: 6;
}

.highway {
    stroke: #e0e1e6;
    stroke-width: 11;
}

.lane.edge {
    stroke: #dcdddf;
    stroke-width: 8;
}

.street.edge {
    stroke: #dcdddf;
    stroke-width: 10;
}

.road.edge {
    stroke: #bbbcc2;
    stroke-width: 9;
}

.highway.edge {
    stroke: #bbbcc2;
    stroke-width: 14;
}

.names text {
    font-size: 26px;
    fill: #444;
    stroke: #fbf8f0;
    stroke-width: 6;
    stroke-linejoin: round;
    paint-order: stroke;
}

.lap circle {
    fill: #fff;
}

.lap text {
    font-size: 36px;
    text-anchor: middle;
}

.badge text {
    fill: #fff;
    font-size: 27px;
    text-anchor: middle;
}

.badge .strong {
    font-weight: 500;
}

.thumb {
    fill: #fff;
}

.credit {
    position: absolute;
    left: 32px;
    bottom: 20px;
    display: flex;
    align-items: center;
    gap: 30px;
    color: #5f5f5a;
}

.brand {
    display: flex;
    align-items: center;
    gap: 3px;
    font-size: 44px;
    line-height: 60px;
}

.brand svg {
    width: 30px;
    height: 36px;
    fill: currentColor;
}

.credit a {
    color: #77756f;
    font-size: 26px;
    text-decoration-thickness: 3px;
    text-underline-offset: 4px;
}

/* numbers */
.stats {
    display: flex;
    flex-wrap: wrap;
    justify-content: center;
    row-gap: 48px;
    padding-top: 80px;
}

.stat {
    display: flex;
    flex-direction: column-reverse;
    width: 33.33%;
    text-align: center;
}

.stat dd {
    font-size: 53px;
    line-height: 70px;
    color: #222;
}

.stat dt {
    margin-top: 10px;
    font-size: 32px;
    font-weight: 400;
    line-height: 44px;
    color: #7a7a7a;
}

.detail {
    position: relative;
    padding: 78px 51px 91px;
    border-bottom: 15px solid #ebeff8;
}

.detail-btn {
    display: block;
    width: 100%;
    height: 150px;
    padding-bottom: 4px;
    border: 6px solid #cfcfcf;
    border-radius: 75px;
    font-size: 45px;
    color: #757575;
}

.tip {
    position: absolute;
    top: 244px;
    left: 50%;
    width: 585px;
    height: 149px;
    box-sizing: border-box;
    display: flex;
    justify-content: space-between;
    align-items: flex-start;
    padding: 34px 29px 0 35px;
    border-radius: 48px;
    background: #28186e;
    color: #fff;
    transform: translateX(-50%);
}

.tip::before {
    content: "";
    position: absolute;
    top: -10px;
    left: 50%;
    border: 10px solid transparent;
    border-top: 0;
    border-bottom-color: #28186e;
    transform: translateX(-50%);
}

.tip p {
    font-size: 31px;
    font-weight: 400;
    line-height: 42px;
}

.tip a {
    display: inline-flex;
    align-items: center;
    gap: 18px;
    color: inherit;
    font-weight: 500;
    text-decoration: none;
}

.tip svg {
    fill: none;
    stroke: #fff;
    stroke-width: 3;
    stroke-linecap: round;
}

.tip a svg {
    width: 16px;
    height: 26px;
    stroke-width: 5;
    stroke-linecap: butt;
}

.tip button svg {
    width: 24px;
    height: 24px;
}

.tip button {
    padding-top: 10px;
}

.diary h2 {
    padding: 72px 53px 40px;
    border-bottom: 3px solid #ebeff8;
    font-size: 57px;
    line-height: 80px;
}

.diary h3 {
    padding: 76px 60px;
    font-size: 45px;
    line-height: 64px;
    color: #222;
}

.home {
    width: 420px;
    height: 15px;
    margin: auto auto 24px;
    border-radius: 8px;
    background: #000;
}
</style>
